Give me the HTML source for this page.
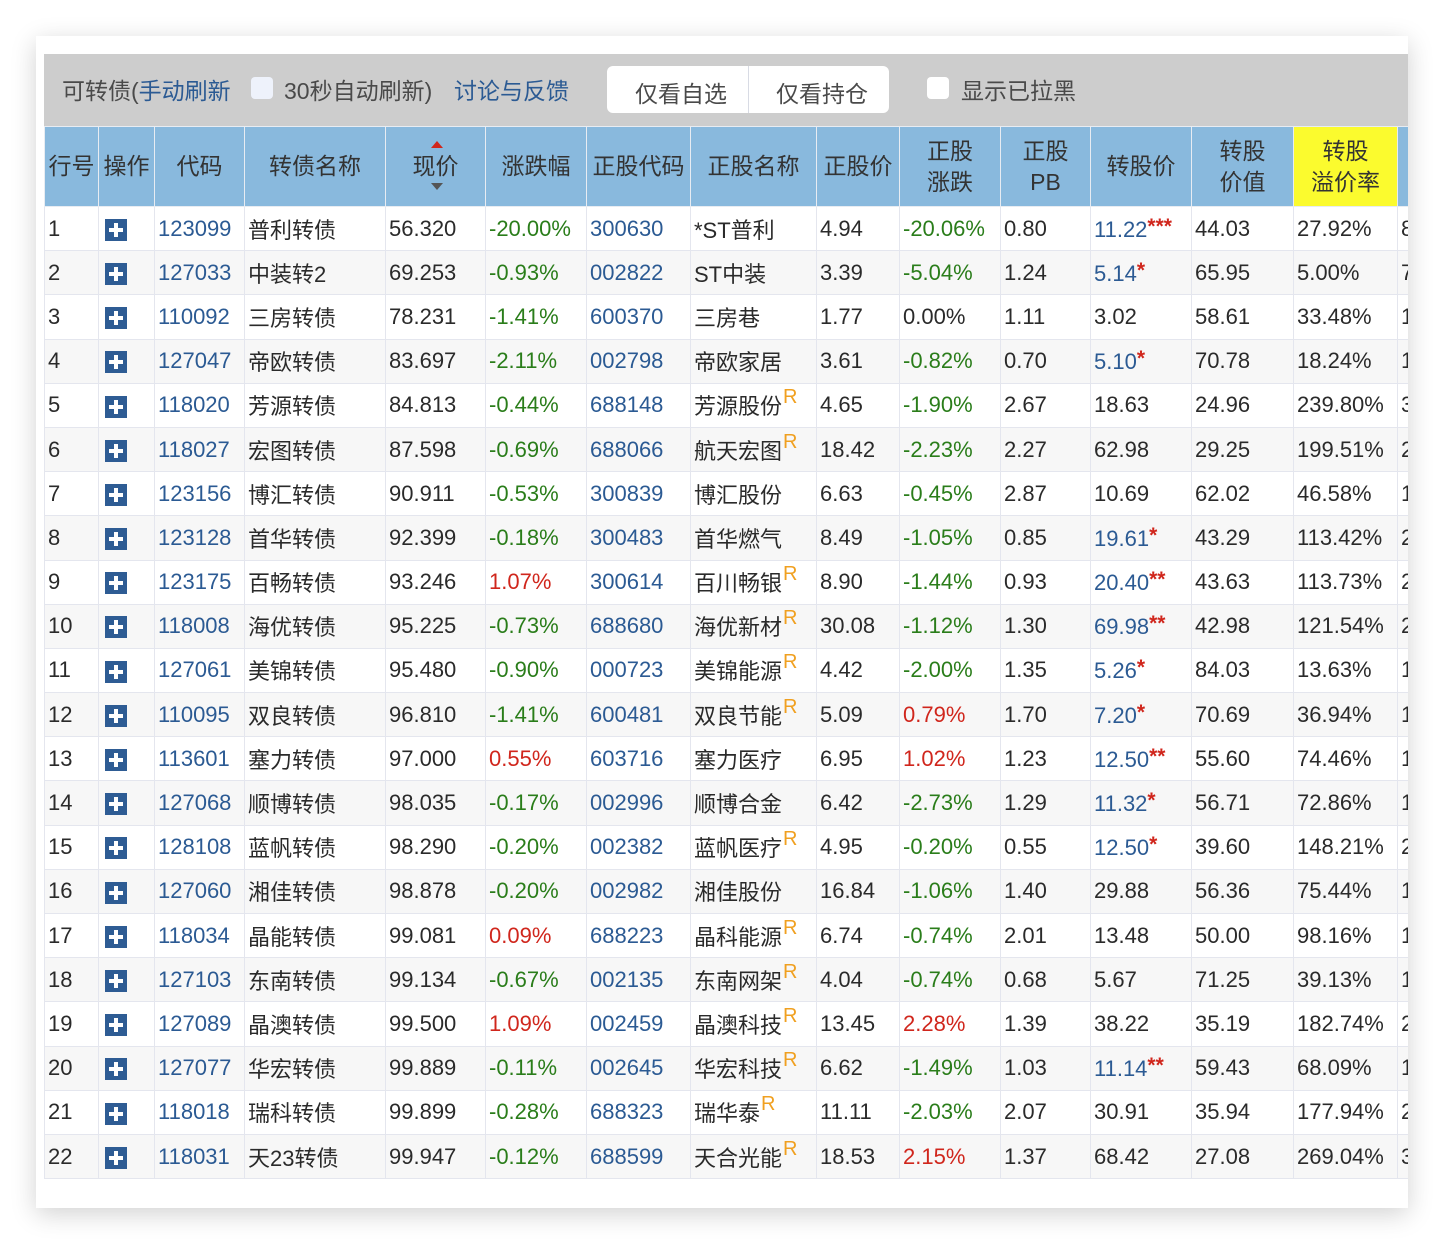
<!DOCTYPE html>
<html><head><meta charset="utf-8">
<style>
*{margin:0;padding:0;box-sizing:border-box}
body{width:1444px;height:1244px;background:#fff;font-family:"Liberation Sans","Noto Sans CJK SC",sans-serif;position:relative;overflow:hidden}
.card{position:absolute;left:36px;top:36px;width:1372px;height:1172px;background:#fff;box-shadow:0 6px 24px rgba(0,0,0,0.18);overflow:hidden}
.bar{position:absolute;left:8px;top:18px;width:1364px;height:72px;background:#cdcdcd;font-size:23px;color:#4a4a4a}
.bar span{position:absolute;top:18px;white-space:nowrap}
.blue{color:#2b5a93}
.cb{position:absolute;width:22px;height:22px;border-radius:4px;background:#fff}
.btns{position:absolute;left:563px;top:12px;width:282px;height:47px;background:#fff;border-radius:6px}
.btns span{top:9px;color:#4a4a4a}
table{position:absolute;left:8px;top:90px;width:1413px;border-collapse:collapse;table-layout:fixed;font-size:22px;color:#2a2a2a}
th{background:#89b9dd;color:#333;font-weight:normal;height:80px;border:1px solid #e8ecf2;line-height:31px;text-align:center;font-size:23px}
th.y{background:#fbfb2e}
td{height:44.2px;border:1px solid #e4e6ee;padding:0 0 0 3px;white-space:nowrap;overflow:hidden}
tr:nth-child(odd) td{background:#f7f7f7}
tr:nth-child(even) td{background:#fff}
.c{color:#2b5a93}.g{color:#2a7d1a}.r{color:#d0261c}
.p{display:inline-block;width:22px;height:22px;background:#2e5c94;position:relative;vertical-align:middle;margin-left:3px}
.p:before{content:"";position:absolute;left:4px;top:9px;width:14px;height:4px;background:#fff}
.p:after{content:"";position:absolute;left:9px;top:4px;width:4px;height:14px;background:#fff}
sup{color:#f0a020;font-size:20px;vertical-align:11px;line-height:0;margin-left:1px}
.s{color:#d0261c;font-size:21px;vertical-align:4px;font-weight:bold}
.ar{position:relative}
.ar:before{content:"";position:absolute;left:18px;top:-12px;border:6px solid transparent;border-bottom:7px solid #d0261c;border-top:0}
.ar:after{content:"";position:absolute;left:18px;top:30px;border:6px solid transparent;border-top:7px solid #555;border-bottom:0}
</style></head><body>
<div class="card">
<div class="bar">
<span style="left:18px">可转债(<span class="blue" style="position:static">手动刷新</span></span>
<div class="cb" style="left:207px;top:23px;background:#eef2fb"></div>
<span style="left:240px">30秒自动刷新)</span>
<span class="blue" style="left:410px">讨论与反馈</span>
<div class="btns"><span style="left:28px">仅看自选</span><div style="position:absolute;left:141px;top:0;width:1px;height:47px;background:#d8dbe4"></div><span style="left:169px">仅看持仓</span></div>
<div class="cb" style="left:883px;top:23px"></div>
<span style="left:917px">显示已拉黑</span>
</div>
<table>
<colgroup><col style="width:54px"><col style="width:56px"><col style="width:90px"><col style="width:141px"><col style="width:100px"><col style="width:101px"><col style="width:104px"><col style="width:126px"><col style="width:83px"><col style="width:101px"><col style="width:90px"><col style="width:101px"><col style="width:102px"><col style="width:104px"><col style="width:60px"></colgroup>
<tr><th>行号</th><th>操作</th><th>代码</th><th>转债名称</th><th><span class="ar">现价</span></th><th>涨跌幅</th><th>正股代码</th><th>正股名称</th><th>正股价</th><th>正股<br>涨跌</th><th>正股<br>PB</th><th>转股价</th><th>转股<br>价值</th><th class="y">转股<br>溢价率</th><th></th></tr>
<tr><td>1</td><td><i class="p"></i></td><td class="c">123099</td><td>普利转债</td><td>56.320</td><td class="g">-20.00%</td><td class="c">300630</td><td>*ST普利</td><td>4.94</td><td class="g">-20.06%</td><td>0.80</td><td class="c">11.22<span class="s">***</span></td><td>44.03</td><td>27.92%</td><td>8</td></tr>
<tr><td>2</td><td><i class="p"></i></td><td class="c">127033</td><td>中装转2</td><td>69.253</td><td class="g">-0.93%</td><td class="c">002822</td><td>ST中装</td><td>3.39</td><td class="g">-5.04%</td><td>1.24</td><td class="c">5.14<span class="s">*</span></td><td>65.95</td><td>5.00%</td><td>7</td></tr>
<tr><td>3</td><td><i class="p"></i></td><td class="c">110092</td><td>三房转债</td><td>78.231</td><td class="g">-1.41%</td><td class="c">600370</td><td>三房巷</td><td>1.77</td><td>0.00%</td><td>1.11</td><td>3.02</td><td>58.61</td><td>33.48%</td><td>1</td></tr>
<tr><td>4</td><td><i class="p"></i></td><td class="c">127047</td><td>帝欧转债</td><td>83.697</td><td class="g">-2.11%</td><td class="c">002798</td><td>帝欧家居</td><td>3.61</td><td class="g">-0.82%</td><td>0.70</td><td class="c">5.10<span class="s">*</span></td><td>70.78</td><td>18.24%</td><td>1</td></tr>
<tr><td>5</td><td><i class="p"></i></td><td class="c">118020</td><td>芳源转债</td><td>84.813</td><td class="g">-0.44%</td><td class="c">688148</td><td>芳源股份<sup>R</sup></td><td>4.65</td><td class="g">-1.90%</td><td>2.67</td><td>18.63</td><td>24.96</td><td>239.80%</td><td>3</td></tr>
<tr><td>6</td><td><i class="p"></i></td><td class="c">118027</td><td>宏图转债</td><td>87.598</td><td class="g">-0.69%</td><td class="c">688066</td><td>航天宏图<sup>R</sup></td><td>18.42</td><td class="g">-2.23%</td><td>2.27</td><td>62.98</td><td>29.25</td><td>199.51%</td><td>2</td></tr>
<tr><td>7</td><td><i class="p"></i></td><td class="c">123156</td><td>博汇转债</td><td>90.911</td><td class="g">-0.53%</td><td class="c">300839</td><td>博汇股份</td><td>6.63</td><td class="g">-0.45%</td><td>2.87</td><td>10.69</td><td>62.02</td><td>46.58%</td><td>1</td></tr>
<tr><td>8</td><td><i class="p"></i></td><td class="c">123128</td><td>首华转债</td><td>92.399</td><td class="g">-0.18%</td><td class="c">300483</td><td>首华燃气</td><td>8.49</td><td class="g">-1.05%</td><td>0.85</td><td class="c">19.61<span class="s">*</span></td><td>43.29</td><td>113.42%</td><td>2</td></tr>
<tr><td>9</td><td><i class="p"></i></td><td class="c">123175</td><td>百畅转债</td><td>93.246</td><td class="r">1.07%</td><td class="c">300614</td><td>百川畅银<sup>R</sup></td><td>8.90</td><td class="g">-1.44%</td><td>0.93</td><td class="c">20.40<span class="s">**</span></td><td>43.63</td><td>113.73%</td><td>2</td></tr>
<tr><td>10</td><td><i class="p"></i></td><td class="c">118008</td><td>海优转债</td><td>95.225</td><td class="g">-0.73%</td><td class="c">688680</td><td>海优新材<sup>R</sup></td><td>30.08</td><td class="g">-1.12%</td><td>1.30</td><td class="c">69.98<span class="s">**</span></td><td>42.98</td><td>121.54%</td><td>2</td></tr>
<tr><td>11</td><td><i class="p"></i></td><td class="c">127061</td><td>美锦转债</td><td>95.480</td><td class="g">-0.90%</td><td class="c">000723</td><td>美锦能源<sup>R</sup></td><td>4.42</td><td class="g">-2.00%</td><td>1.35</td><td class="c">5.26<span class="s">*</span></td><td>84.03</td><td>13.63%</td><td>1</td></tr>
<tr><td>12</td><td><i class="p"></i></td><td class="c">110095</td><td>双良转债</td><td>96.810</td><td class="g">-1.41%</td><td class="c">600481</td><td>双良节能<sup>R</sup></td><td>5.09</td><td class="r">0.79%</td><td>1.70</td><td class="c">7.20<span class="s">*</span></td><td>70.69</td><td>36.94%</td><td>1</td></tr>
<tr><td>13</td><td><i class="p"></i></td><td class="c">113601</td><td>塞力转债</td><td>97.000</td><td class="r">0.55%</td><td class="c">603716</td><td>塞力医疗</td><td>6.95</td><td class="r">1.02%</td><td>1.23</td><td class="c">12.50<span class="s">**</span></td><td>55.60</td><td>74.46%</td><td>1</td></tr>
<tr><td>14</td><td><i class="p"></i></td><td class="c">127068</td><td>顺博转债</td><td>98.035</td><td class="g">-0.17%</td><td class="c">002996</td><td>顺博合金</td><td>6.42</td><td class="g">-2.73%</td><td>1.29</td><td class="c">11.32<span class="s">*</span></td><td>56.71</td><td>72.86%</td><td>1</td></tr>
<tr><td>15</td><td><i class="p"></i></td><td class="c">128108</td><td>蓝帆转债</td><td>98.290</td><td class="g">-0.20%</td><td class="c">002382</td><td>蓝帆医疗<sup>R</sup></td><td>4.95</td><td class="g">-0.20%</td><td>0.55</td><td class="c">12.50<span class="s">*</span></td><td>39.60</td><td>148.21%</td><td>2</td></tr>
<tr><td>16</td><td><i class="p"></i></td><td class="c">127060</td><td>湘佳转债</td><td>98.878</td><td class="g">-0.20%</td><td class="c">002982</td><td>湘佳股份</td><td>16.84</td><td class="g">-1.06%</td><td>1.40</td><td>29.88</td><td>56.36</td><td>75.44%</td><td>1</td></tr>
<tr><td>17</td><td><i class="p"></i></td><td class="c">118034</td><td>晶能转债</td><td>99.081</td><td class="r">0.09%</td><td class="c">688223</td><td>晶科能源<sup>R</sup></td><td>6.74</td><td class="g">-0.74%</td><td>2.01</td><td>13.48</td><td>50.00</td><td>98.16%</td><td>1</td></tr>
<tr><td>18</td><td><i class="p"></i></td><td class="c">127103</td><td>东南转债</td><td>99.134</td><td class="g">-0.67%</td><td class="c">002135</td><td>东南网架<sup>R</sup></td><td>4.04</td><td class="g">-0.74%</td><td>0.68</td><td>5.67</td><td>71.25</td><td>39.13%</td><td>1</td></tr>
<tr><td>19</td><td><i class="p"></i></td><td class="c">127089</td><td>晶澳转债</td><td>99.500</td><td class="r">1.09%</td><td class="c">002459</td><td>晶澳科技<sup>R</sup></td><td>13.45</td><td class="r">2.28%</td><td>1.39</td><td>38.22</td><td>35.19</td><td>182.74%</td><td>2</td></tr>
<tr><td>20</td><td><i class="p"></i></td><td class="c">127077</td><td>华宏转债</td><td>99.889</td><td class="g">-0.11%</td><td class="c">002645</td><td>华宏科技<sup>R</sup></td><td>6.62</td><td class="g">-1.49%</td><td>1.03</td><td class="c">11.14<span class="s">**</span></td><td>59.43</td><td>68.09%</td><td>1</td></tr>
<tr><td>21</td><td><i class="p"></i></td><td class="c">118018</td><td>瑞科转债</td><td>99.899</td><td class="g">-0.28%</td><td class="c">688323</td><td>瑞华泰<sup>R</sup></td><td>11.11</td><td class="g">-2.03%</td><td>2.07</td><td>30.91</td><td>35.94</td><td>177.94%</td><td>2</td></tr>
<tr><td>22</td><td><i class="p"></i></td><td class="c">118031</td><td>天23转债</td><td>99.947</td><td class="g">-0.12%</td><td class="c">688599</td><td>天合光能<sup>R</sup></td><td>18.53</td><td class="r">2.15%</td><td>1.37</td><td>68.42</td><td>27.08</td><td>269.04%</td><td>3</td></tr>
</table>
</div>
</body></html>
